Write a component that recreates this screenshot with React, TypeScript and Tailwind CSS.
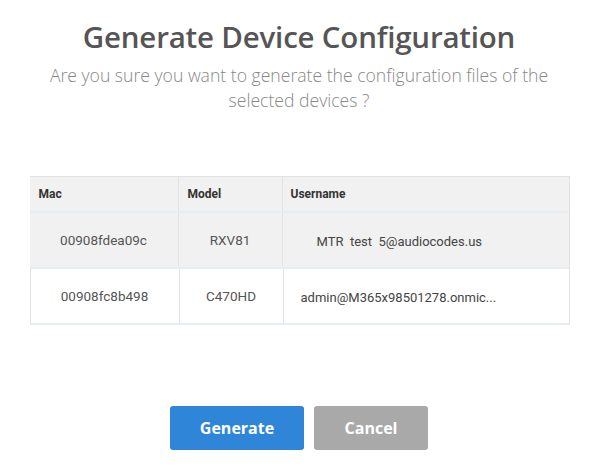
export default function App() {
  const rows = [
    { mac: "00908fdea09c", model: "RXV81", user: "MTR  test  5@audiocodes.us", shaded: true },
    { mac: "00908fc8b498", model: "C470HD", user: "admin@M365x98501278.onmic...", shaded: false },
  ]

  return (
    <div className="w-[598px] h-[470px] bg-white flex flex-col items-center font-['Open_Sans',sans-serif]">
      <h1 className="mt-[17px] text-[29.5px] leading-[40px] font-semibold text-[#555555] tracking-[-0.2px]">
        Generate Device Configuration
      </h1>
      <p className="mt-[6px] w-[530px] text-center text-[17.6px] leading-[25px] font-light text-[#888888]">
        Are you sure you want to generate the configuration files of the selected devices ?
      </p>

      {/* Devices table */}
      <div className="mt-[63px] w-[540px] ml-[1px] border-t border-r border-[#e2e2e2] font-['Roboto',sans-serif] text-[13.5px] text-[#333]">
        <div className="flex h-[36px] bg-[#f1f1f1] border-b-2 border-[#e8edf1] font-bold text-[12px]">
          <div className="w-[149px] pl-[9px] flex items-center border-r border-[#e2e2e2]">Mac</div>
          <div className="w-[104px] pl-[9px] flex items-center border-r border-[#e2e2e2]">Model</div>
          <div className="flex-1 pl-[8px] flex items-center">Username</div>
        </div>
        {rows.map((r) => (
          <div
            key={r.mac}
            className={`flex h-[56px] border-b-2 border-[#e8edf1] ${r.shaded ? "bg-[#f1f1f1]" : "bg-white border-l border-l-[#e2e2e2]"}`}
          >
            <div className="w-[149px] flex items-center justify-center border-r border-[#e2e2e2] text-[#555]">{r.mac}</div>
            <div className="w-[104px] flex items-center justify-center border-r border-[#e2e2e2] text-[#555]">{r.model}</div>
            <div
              className={`flex-1 flex items-center pt-[4px] whitespace-pre text-[#444] text-[13px] ${r.shaded ? "pl-[34px]" : "pl-[17px]"}`}
            >
              {r.user}
            </div>
          </div>
        ))}
      </div>

      <div className="mt-[81px] flex gap-[10px]">
        <button className="w-[134px] h-[44px] rounded-[3px] bg-[#2f86d8] text-white text-[16px] font-bold">
          Generate
        </button>
        <button className="w-[114px] h-[44px] rounded-[3px] bg-[#a9a9a9] text-white text-[16px] font-bold">
          Cancel
        </button>
      </div>
    </div>
  )
}
